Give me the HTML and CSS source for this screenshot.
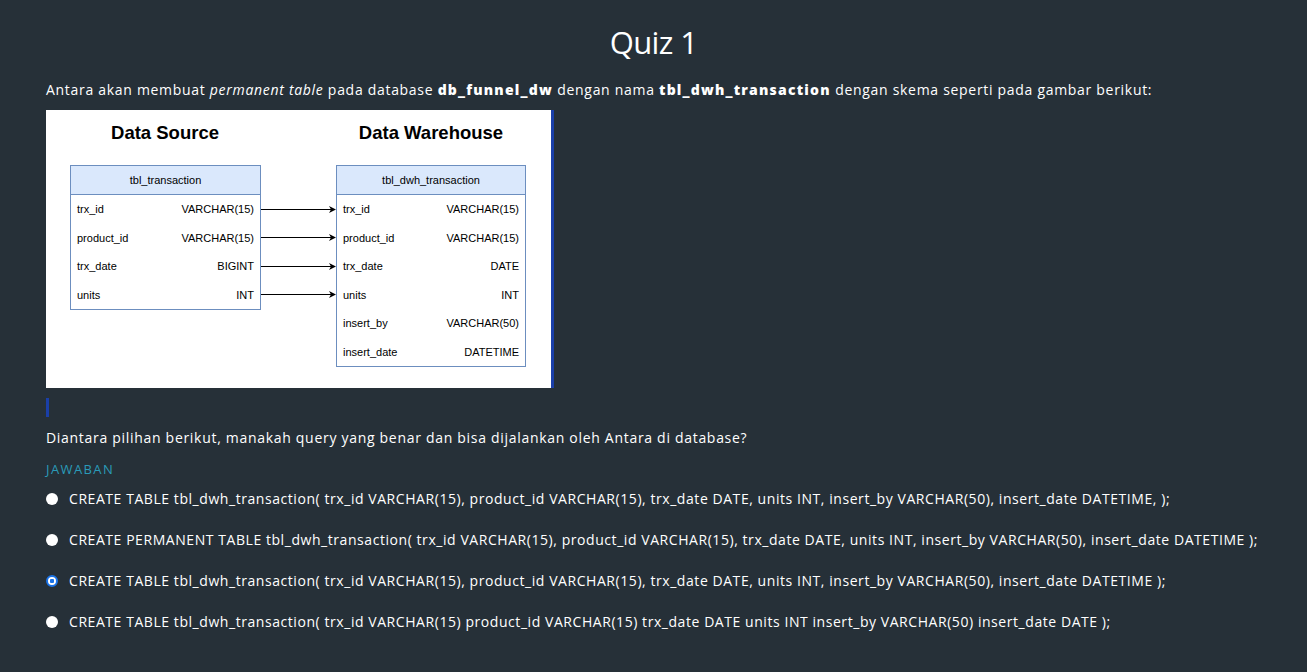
FILE: index.html
```html
<!DOCTYPE html>
<html lang="id">
<head>
<meta charset="utf-8">
<title>Quiz 1</title>
<link rel="stylesheet" href="styles.css">
</head>
<body>
<main class="quiz">
  <h1 class="title">Quiz 1</h1>
  <p class="text intro">Antara akan membuat <em>permanent table</em> pada database <strong>db_funnel_dw</strong> dengan nama <strong>tbl_dwh_transaction</strong> dengan skema seperti pada gambar berikut:</p>
  <div class="figure">
    <div class="diagram">
      <div class="heading h-src">Data Source</div>
      <div class="heading h-dw">Data Warehouse</div>
      <div class="tbl t-src">
        <div class="thead">tbl_transaction</div>
        <div class="row"><span>trx_id</span><span>VARCHAR(15)</span></div>
        <div class="row"><span>product_id</span><span>VARCHAR(15)</span></div>
        <div class="row"><span>trx_date</span><span>BIGINT</span></div>
        <div class="row"><span>units</span><span>INT</span></div>
      </div>
      <div class="tbl t-dw">
        <div class="thead">tbl_dwh_transaction</div>
        <div class="row"><span>trx_id</span><span>VARCHAR(15)</span></div>
        <div class="row"><span>product_id</span><span>VARCHAR(15)</span></div>
        <div class="row"><span>trx_date</span><span>DATE</span></div>
        <div class="row"><span>units</span><span>INT</span></div>
        <div class="row"><span>insert_by</span><span>VARCHAR(50)</span></div>
        <div class="row"><span>insert_date</span><span>DATETIME</span></div>
      </div>
      <svg class="arrows" width="508" height="278" viewBox="0 0 508 278">
        <g stroke="#000" stroke-width="1" fill="#000">
          <line x1="215" y1="99.5" x2="286" y2="99.5"/>
          <polygon points="290,99.5 283,96 285,99.5 283,103" stroke="none"/>
          <line x1="215" y1="127.5" x2="286" y2="127.5"/>
          <polygon points="290,127.5 283,124 285,127.5 283,131" stroke="none"/>
          <line x1="215" y1="156.5" x2="286" y2="156.5"/>
          <polygon points="290,156.5 283,153 285,156.5 283,160" stroke="none"/>
          <line x1="215" y1="184.5" x2="286" y2="184.5"/>
          <polygon points="290,184.5 283,181 285,184.5 283,188" stroke="none"/>
        </g>
      </svg>
    </div>
  </div>
  <div class="marker"></div>
  <p class="text question">Diantara pilihan berikut, manakah query yang benar dan bisa dijalankan oleh Antara di database?</p>
  <div class="label">JAWABAN</div>
  <ul class="options">
    <li class="option"><span class="radio"></span><span>CREATE TABLE tbl_dwh_transaction( trx_id VARCHAR(15), product_id VARCHAR(15), trx_date DATE, units INT, insert_by VARCHAR(50), insert_date DATETIME, );</span></li>
    <li class="option"><span class="radio"></span><span>CREATE PERMANENT TABLE tbl_dwh_transaction( trx_id VARCHAR(15), product_id VARCHAR(15), trx_date DATE, units INT, insert_by VARCHAR(50), insert_date DATETIME );</span></li>
    <li class="option"><span class="radio checked"></span><span>CREATE TABLE tbl_dwh_transaction( trx_id VARCHAR(15), product_id VARCHAR(15), trx_date DATE, units INT, insert_by VARCHAR(50), insert_date DATETIME );</span></li>
    <li class="option"><span class="radio"></span><span>CREATE TABLE tbl_dwh_transaction( trx_id VARCHAR(15) product_id VARCHAR(15) trx_date DATE units INT insert_by VARCHAR(50) insert_date DATE );</span></li>
  </ul>
</main>
</body>
</html>
```
FILE: styles.css
```css
html, body {
  margin: 0;
  padding: 0;
  background: #263038;
}
body {
  font-family: "Open Sans", "DejaVu Sans", sans-serif;
  color: #ffffff;
  height: 672px;
  overflow: hidden;
}
.quiz {
  padding: 22px 46px 0 46px;
}
.title {
  margin: 0;
  text-align: center;
  font-size: 31px;
  font-weight: 500;
  line-height: 40px;
  letter-spacing: -0.6px;
}
.text {
  margin: 0;
  font-size: 14px;
  line-height: 20px;
  letter-spacing: 0.7px;
}
.intro {
  margin-top: 18px;
}
.text strong {
  font-weight: 800;
  letter-spacing: 1.2px;
}
.figure {
  margin-top: 10px;
  width: 505px;
  height: 278px;
  background: #ffffff;
  border-right: 3px solid #1a3fa8;
}
.diagram {
  position: relative;
  width: 505px;
  height: 278px;
  font-family: "Liberation Sans", Arial, sans-serif;
  color: #000;
}
.heading {
  position: absolute;
  top: 11px;
  font-size: 18.5px;
  font-weight: 700;
  line-height: 24px;
  transform: translateX(-50%);
  white-space: nowrap;
}
.h-src { left: 119px; }
.h-dw { left: 385px; }
.tbl {
  position: absolute;
  top: 55px;
  border: 1px solid #6c8ebf;
  background: #fff;
  font-size: 11px;
}
.t-src { left: 24px; width: 189px; }
.t-dw { left: 290px; width: 188px; }
.thead {
  height: 28px;
  line-height: 28px;
  text-align: center;
  background: #dae8fc;
  border-bottom: 1px solid #6c8ebf;
}
.row {
  height: 28.5px;
  display: flex;
  justify-content: space-between;
  align-items: center;
  padding: 0 6px;
}
.arrows {
  position: absolute;
  left: 0;
  top: 0;
}
.marker {
  margin-top: 10px;
  width: 3px;
  height: 19px;
  background: #1a3fa8;
}
.question {
  margin-top: 11px;
}
.label {
  margin-top: 12px;
  font-size: 13px;
  line-height: 18px;
  color: #2a9bb8;
  letter-spacing: 1.4px;
}
.options {
  list-style: none;
  margin: 11px 0 0 0;
  padding: 0;
  display: flex;
  flex-direction: column;
  gap: 21px;
}
.option {
  display: flex;
  align-items: center;
  gap: 11px;
  font-size: 14px;
  line-height: 20px;
  letter-spacing: 0.56px;
  white-space: nowrap;
}
.radio {
  flex: none;
  width: 12px;
  height: 12px;
  border-radius: 50%;
  background: #fff;
  box-sizing: border-box;
}
.radio.checked {
  border: 2px solid #1a73e8;
  background: radial-gradient(circle, #1a73e8 0 2px, #fff 2.5px);
}
```
